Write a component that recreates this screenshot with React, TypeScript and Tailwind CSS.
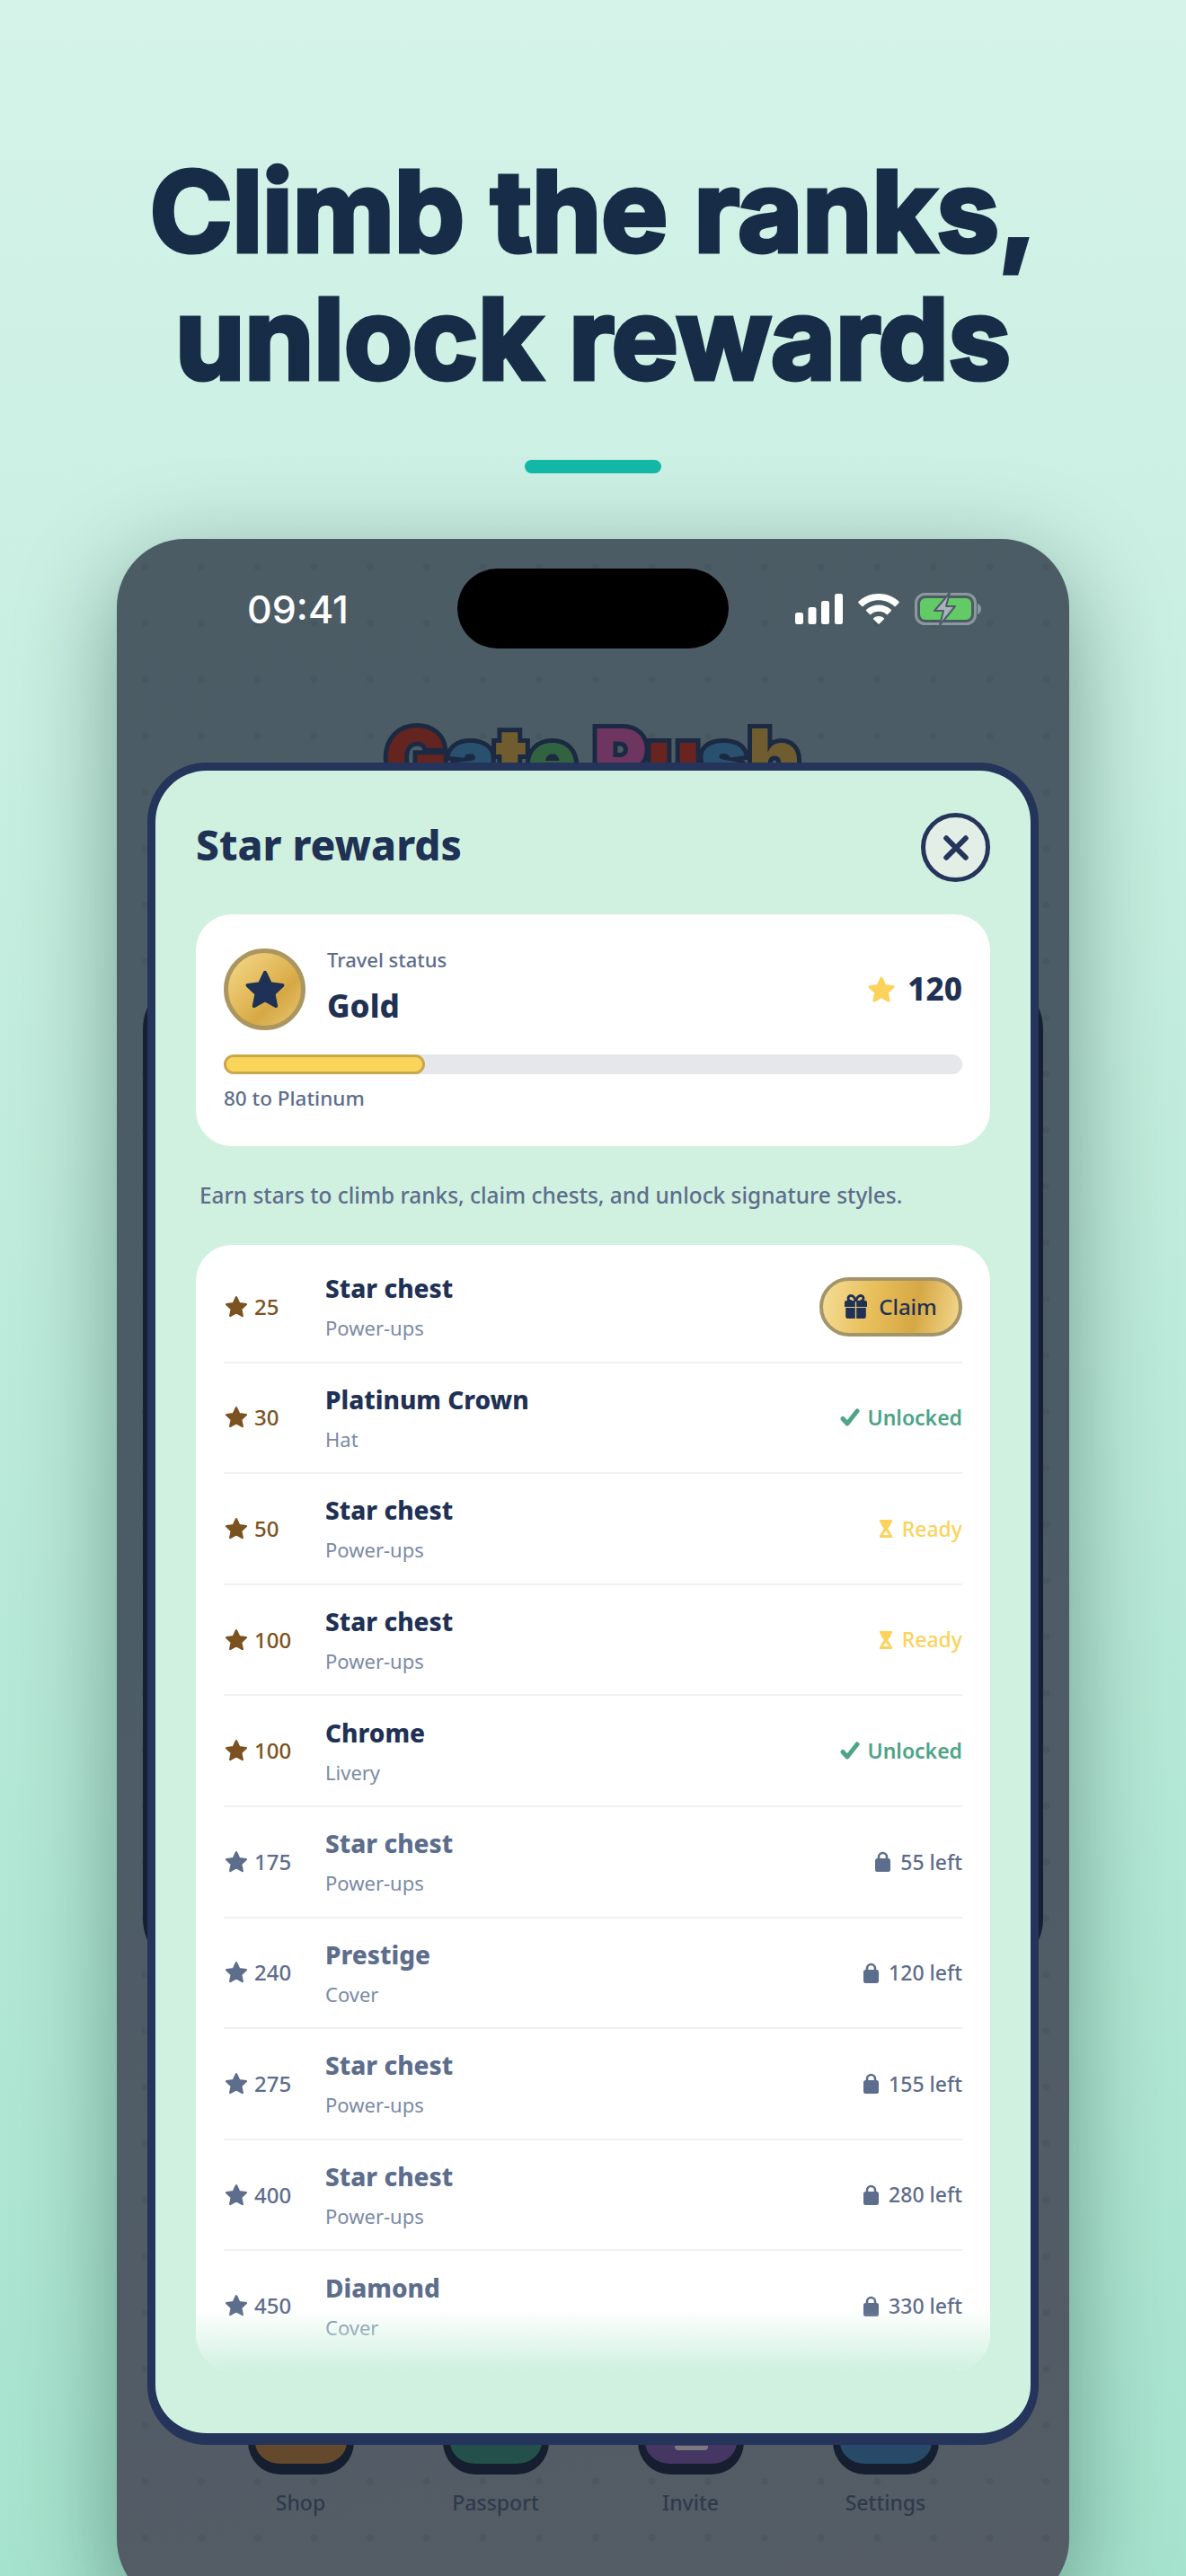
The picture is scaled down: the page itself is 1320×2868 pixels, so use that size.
type Status = 'claim' | 'unlocked' | 'ready' | 'locked';

interface Reward {
  stars: number;
  title: string;
  kind: string;
  status: Status;
  left?: number;
}

const rewards: Reward[] = [
  { stars: 25, title: 'Star chest', kind: 'Power-ups', status: 'claim' },
  { stars: 30, title: 'Platinum Crown', kind: 'Hat', status: 'unlocked' },
  { stars: 50, title: 'Star chest', kind: 'Power-ups', status: 'ready' },
  { stars: 100, title: 'Star chest', kind: 'Power-ups', status: 'ready' },
  { stars: 100, title: 'Chrome', kind: 'Livery', status: 'unlocked' },
  { stars: 175, title: 'Star chest', kind: 'Power-ups', status: 'locked', left: 55 },
  { stars: 240, title: 'Prestige', kind: 'Cover', status: 'locked', left: 120 },
  { stars: 275, title: 'Star chest', kind: 'Power-ups', status: 'locked', left: 155 },
  { stars: 400, title: 'Star chest', kind: 'Power-ups', status: 'locked', left: 280 },
  { stars: 450, title: 'Diamond', kind: 'Cover', status: 'locked', left: 330 },
];

const navItems = [
  { label: 'Shop', tile: 'bg-[#65492c]' },
  { label: 'Passport', tile: 'bg-[#23504a]' },
  { label: 'Invite', tile: 'bg-[#453663]' },
  { label: 'Settings', tile: 'bg-[#274a68]' },
];

function Star({ className }: { className: string }) {
  return (
    <svg viewBox="0 0 24 24" className={className} fill="currentColor" stroke="currentColor" strokeWidth="2" strokeLinejoin="round">
      <path d="M12 2.800l2.800 6 6.500.8-4.800 4.500 1.300 6.500L12 17.400l-5.800 3.200 1.300-6.500-4.800-4.500 6.500-.8z" />
    </svg>
  );
}

function Gift() {
  return (
    <svg viewBox="0 0 25 27" className="h-[27px] w-[25px]" fill="#1f3154">
      <path d="M12.500 8C11.500 4 9.500 1.500 7 1.500 4.800 1.500 3.800 3.200 4 5c.2 1.800 1.800 3 4 3M12.500 8c1-4 3-6.500 5.500-6.500 2.200 0 3.200 1.700 3 3.500-.2 1.800-1.800 3-4 3" fill="none" stroke="#1f3154" strokeWidth="2.800" />
      <path d="M2 7h9.800v7H0V9a2 2 0 0 1 2-2zM13.200 7H23a2 2 0 0 1 2 2v5H13.200z" />
      <path d="M1.200 15h10.600v12H3.500a2.300 2.300 0 0 1-2.300-2.300zM13.200 15h10.600v9.700a2.300 2.300 0 0 1-2.300 2.300h-8.300z" />
    </svg>
  );
}

function Check() {
  return (
    <svg viewBox="0 0 22 20" className="h-[20px] w-[22px]" fill="none" stroke="#4ea487" strokeWidth="5" strokeLinecap="round" strokeLinejoin="round">
      <path d="M3 11.500l5 5.500L19 3" />
    </svg>
  );
}

function Hourglass() {
  return (
    <svg viewBox="0 0 14 20" className="h-[20px] w-[14px]" fill="#fbd35c">
      <path d="M0 0h14v3h-1.200c0 3-2.400 5-3.800 7 1.400 2 3.800 4 3.800 7H14v3H0v-3h1.200c0-3 2.400-5 3.800-7C3.600 8 1.200 6 1.200 3H0z" />
      <path d="M7 12.500c-1.300 1.500-2.800 3-3 4.500h6c-.2-1.500-1.700-3-3-4.500z" fill="#ffffff" />
    </svg>
  );
}

function Lock() {
  return (
    <svg viewBox="0 0 17 23" className="h-[23px] w-[17px]">
      <path d="M4 10V6.500a4.500 4.500 0 0 1 9 0V10" fill="none" stroke="#5d6d8c" strokeWidth="2.600" />
      <rect x="0" y="8" width="17" height="15" rx="2.500" fill="#5d6d8c" />
    </svg>
  );
}

function RewardStatus({ reward }: { reward: Reward }) {
  if (reward.status === 'claim') {
    return (
      <div className="flex h-[66px] w-[159px] items-center justify-center gap-[13px] rounded-full border-[4px] border-[#a3946a] bg-[linear-gradient(100deg,#f5dd97_0%,#e8c05c_35%,#d6a845_68%,#f2d88e_100%)] text-[24px] font-medium text-[#1f3154]">
        <Gift />
        <span>Claim</span>
      </div>
    );
  }
  if (reward.status === 'unlocked') {
    return (
      <div className="flex items-center gap-[9px] text-[23px] font-semibold text-[#4ea487]">
        <Check />
        <span>Unlocked</span>
      </div>
    );
  }
  if (reward.status === 'ready') {
    return (
      <div className="flex items-center gap-[11px] text-[23px] font-medium text-[#fbd35c]">
        <Hourglass />
        <span>Ready</span>
      </div>
    );
  }
  return (
    <div className="flex items-center gap-[11px] text-[23px] font-medium text-[#5d6d8c]">
      <Lock />
      <span>{reward.left} left</span>
    </div>
  );
}

function RewardRow({ reward }: { reward: Reward }) {
  const locked = reward.status === 'locked';
  return (
    <div className="flex h-[123.6px] items-center border-b-2 border-[#f0f0f5] last:border-b-0">
      <div className={`flex w-[113px] items-center gap-[6px] text-[24px] font-medium ${locked ? 'text-[#5d6d8c]' : 'text-[#7b5220]'}`}>
        <Star className="h-[28px] w-[28px]" />
        <span>{reward.stars}</span>
      </div>
      <div className="flex-1 pt-[3px]">
        <div className={`text-[28px] leading-[44px] font-extrabold ${locked ? 'text-[#5d6d8c]' : 'text-[#1f3154]'}`}>{reward.title}</div>
        <div className="text-[22px] leading-[44px] text-[#7b8aa6]">{reward.kind}</div>
      </div>
      <RewardStatus reward={reward} />
    </div>
  );
}

function StatusBar() {
  return (
    <div className="relative z-20 flex h-[156px] shrink-0 items-center justify-between pr-[98px] pl-[145px]">
      <span className="text-[43px] leading-[54px] font-medium text-white font-['Inter',sans-serif]">09:41</span>
      <div className="absolute top-[33px] left-[379px] h-[89px] w-[302px] rounded-[45px] bg-black" />
      <div className="flex items-center gap-[17px]">
        <svg viewBox="0 0 53 34" className="h-[34px] w-[53px]" fill="white">
          <rect x="0" y="21" width="9" height="13" rx="2.500" />
          <rect x="14.500" y="15" width="9" height="19" rx="2.500" />
          <rect x="29" y="8" width="9" height="26" rx="2.500" />
          <rect x="44" y="0" width="9" height="34" rx="2.500" />
        </svg>
        <svg viewBox="0 0 46 34" className="h-[34px] w-[46px]" fill="white">
          <path d="M23 0c8.600 0 16.500 3.300 22.500 8.800a1 1 0 0 1 0 1.400l-3.700 3.800a1 1 0 0 1-1.400 0C35.800 9.800 29.700 7.300 23 7.300S10.200 9.800 5.600 14a1 1 0 0 1-1.400 0L.5 10.200a1 1 0 0 1 0-1.400C6.500 3.300 14.400 0 23 0z" />
          <path d="M23 12.500c5.300 0 10.100 2 13.800 5.300a1 1 0 0 1 0 1.400L33 23a1 1 0 0 1-1.400 0c-2.300-2-5.300-3.200-8.600-3.200s-6.300 1.200-8.600 3.200a1 1 0 0 1-1.400 0l-3.800-3.800a1 1 0 0 1 0-1.400c3.700-3.300 8.500-5.300 13.800-5.300z" />
          <path d="M23 25c2.200 0 4.200.8 5.700 2.100a1 1 0 0 1 0 1.400l-5 5a1 1 0 0 1-1.400 0l-5-5a1 1 0 0 1 0-1.400C18.800 25.800 20.800 25 23 25z" />
        </svg>
        <svg viewBox="0 0 74 36" className="h-[36px] w-[74px]">
          <rect x="1.500" y="1.500" width="66" height="33" rx="10" fill="none" stroke="#8d979e" strokeWidth="3" />
          <rect x="6" y="6" width="57" height="24" rx="6" fill="#63cb66" />
          <path d="M70 12c2.500.6 4 3 4 6s-1.500 5.400-4 6z" fill="#8d979e" />
          <path d="M39 0L22 20h10l-4 16 17-21H35z" fill="#a9b2b8" stroke="#4c5c68" strokeWidth="2" strokeLinejoin="round" />
        </svg>
      </div>
    </div>
  );
}

function GameBehind() {
  const letters = [
    ['G', 'text-[#642420]'],
    ['a', 'text-[#2a5070]'],
    ['t', 'text-[#6f5d30]'],
    ['e', 'text-[#316340]'],
    [' ', ''],
    ['P', 'text-[#6e3560]'],
    ['u', 'text-[#6a2420]'],
    ['s', 'text-[#2a5070]'],
    ['h', 'text-[#6f5d30]'],
  ];
  return (
    <>
      <div className="mt-[38px] text-center text-[91px] leading-[100px] font-black whitespace-pre [-webkit-text-stroke:10px_#1b2a42] [paint-order:stroke_fill] font-['Inter',sans-serif]">
        {letters.map(([letter, color], i) => (
          <span key={i} className={color}>
            {letter}
          </span>
        ))}
      </div>
      <div className="mx-auto mt-auto mb-[101px] grid w-[868px] grid-cols-4">
        {navItems.map((item) => (
          <div key={item.label} className="flex flex-col items-center gap-[15px]">
            <div className={`relative h-[120px] w-[118px] rounded-[36px] border-x-[8px] border-t-[8px] border-b-[12px] border-[#151f30] ${item.tile}`}>
              {item.label === 'Invite' && <div className="absolute top-[80px] left-[33px] h-[5px] w-[37px] rounded-b bg-[#7b7a80]" />}
            </div>
            <span className="text-[23px] leading-[32px] font-medium text-[#2e3a4c]">{item.label}</span>
          </div>
        ))}
      </div>
    </>
  );
}

function RewardsModal() {
  return (
    <div className="absolute top-[249px] left-[34px] z-10 flex h-[1873px] w-[992px] flex-col rounded-[66px] border-[9px] border-b-[13px] border-[#24345a] bg-[#d0f1e0] px-[45px] pt-[47px]">
      <div className="flex h-[77px] items-center justify-between">
        <h2 className="mt-[-6px] text-[46px] font-extrabold text-[#1f3154]">Star rewards</h2>
        <div className="flex h-[77px] w-[77px] items-center justify-center rounded-full border-[5px] border-[#24345a] bg-[#e3eee6]">
          <svg viewBox="0 0 26 26" className="h-[28px] w-[28px]" fill="none" stroke="#24345a" strokeWidth="5.500" strokeLinecap="round">
            <path d="M3 3l20 20M23 3L3 23" />
          </svg>
        </div>
      </div>

      <div className="mt-[36px] h-[258px] rounded-[40px] bg-white px-[31px] pt-[38px]">
        <div className="flex items-center">
          <div className="flex h-[91px] w-[91px] items-center justify-center rounded-full border-[5px] border-[#ab9660] bg-[linear-gradient(135deg,#f5d98c_0%,#e0b654_50%,#d6a845_65%,#e9c873_100%)]">
            <Star className="h-[50px] w-[50px] text-[#1f3154]" />
          </div>
          <div className="ml-[24px] flex-1">
            <div className="mt-[-8px] text-[22px] leading-[34px] font-medium text-[#5d6d8c]">Travel status</div>
            <div className="mt-[10px] text-[35px] leading-[50px] font-extrabold text-[#1f3154]">Gold</div>
          </div>
          <div className="flex items-center gap-[12px] text-[35px] font-extrabold text-[#1f3154]">
            <Star className="h-[34px] w-[34px] text-[#fbd35c]" />
            <span>120</span>
          </div>
        </div>
        <div className="mt-[27px] h-[22px] rounded-full bg-[#e5e7eb]">
          <div className="h-full w-[224px] rounded-full border-[3px] border-[#c8a84e] bg-[#fbd45a]" />
        </div>
        <div className="mt-[10px] text-[22.500px] leading-[34px] font-medium text-[#5d6d8c]">80 to Platinum</div>
      </div>

      <div className="flex h-[110px] items-center px-[4px] text-[24.400px] font-medium text-[#5d6d8c]">
        Earn stars to climb ranks, claim chests, and unlock signature styles.
      </div>

      <div className="relative h-[1253px] overflow-hidden rounded-[40px] bg-white px-[31px] pt-[8px]">
        {rewards.map((reward) => (
          <RewardRow key={`${reward.stars}-${reward.title}`} reward={reward} />
        ))}
        <div className="absolute right-0 bottom-0 left-0 h-[68px] bg-[linear-gradient(to_bottom,rgba(208,241,224,0),#d0f1e0)]" />
      </div>
    </div>
  );
}

export default function App() {
  return (
    <div className="flex h-[2868px] w-[1320px] flex-col items-center overflow-hidden bg-[linear-gradient(to_bottom,#d5f3e9,#a6e3ce)] font-['Noto_Sans',sans-serif]">
      <h1 className="mt-[164px] text-center text-[124px] leading-[142px] font-bold text-[#172c47] [-webkit-text-stroke:5px_#172c47] [stroke-linejoin:round] font-['Inter',sans-serif]">
        Climb the ranks,
        <br />
        unlock rewards
      </h1>
      <div className="mt-[64px] h-[15px] w-[152px] shrink-0 rounded-full bg-[#14b8a6]" />
      <div className="relative mt-[73px] flex h-[2303px] w-[1060px] shrink-0 flex-col overflow-hidden rounded-[76px] bg-[#4d5c66] bg-[radial-gradient(circle,rgba(40,50,60,0.13)_3.5px,transparent_4.5px),linear-gradient(170deg,#4c5c65_0%,#4c5c67_50%,#555c65_100%)] bg-[size:62.7px_62.7px,100%_100%] shadow-[0_30px_110px_rgba(0,40,30,0.4)]">
        <StatusBar />
        <GameBehind />
        <div className="absolute top-[486px] left-[29px] h-[1110px] w-[1002px] rounded-[60px] bg-[#152033]" />
        <RewardsModal />
      </div>
    </div>
  );
}
